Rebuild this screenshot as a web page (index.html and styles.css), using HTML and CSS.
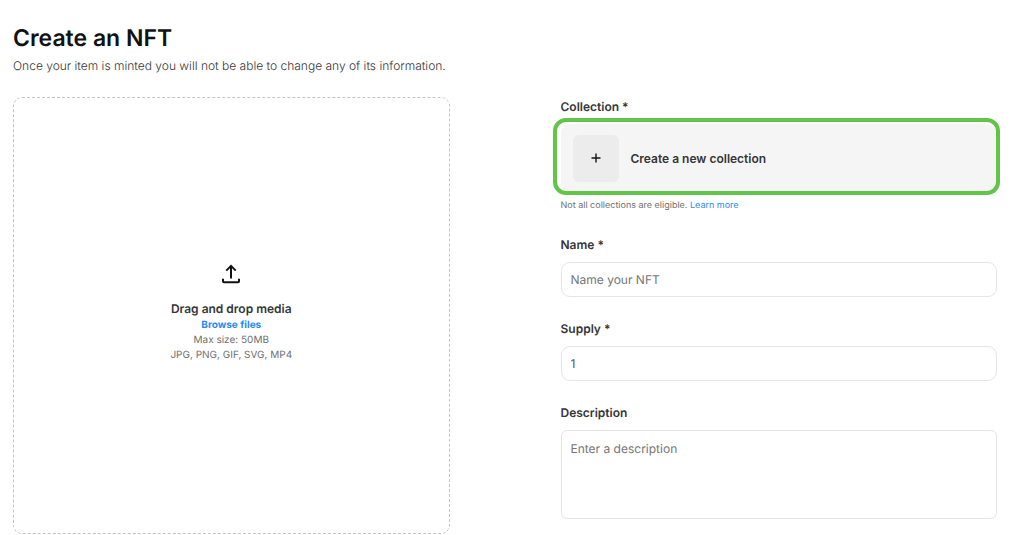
FILE: index.html
```html
<!DOCTYPE html>
<html lang="en">
<head>
<meta charset="utf-8">
<meta name="viewport" content="width=device-width, initial-scale=1">
<title>Create an NFT</title>
<link rel="stylesheet" href="styles.css">
</head>
<body>
<main class="page">
  <header class="intro">
    <h1 class="title">Create an NFT</h1>
    <p class="subtitle">Once your item is minted you will not be able to change any of its information.</p>
  </header>
  <form class="form">
    <section class="dropzone">
      <svg class="upload-icon" viewBox="0 0 20 20" aria-hidden="true">
        <path d="M10 14.5V2M5.3 6.6 10 1.9l4.7 4.7M2 14.7v2.6q0 1 1 1h14q1 0 1-1v-2.6"/>
      </svg>
      <p class="drop-title">Drag and drop media</p>
      <a class="browse" href="#">Browse files</a>
      <p class="drop-hint">Max size: 50MB</p>
      <p class="drop-hint">JPG, PNG, GIF, SVG, MP4</p>
    </section>
    <div class="fields">
      <div class="field">
        <label class="label" for="collection">Collection *</label>
        <button class="collection" id="collection" type="button">
          <span class="plus"><svg class="plus-icon" viewBox="0 0 10 10" aria-hidden="true"><path d="M5 .5v9M.5 5h9"/></svg></span>
          <span>Create a new collection</span>
        </button>
        <p class="note">Not all collections are eligible. <a class="link" href="#">Learn more</a></p>
      </div>
      <div class="field">
        <label class="label" for="name">Name *</label>
        <input class="control" id="name" type="text" placeholder="Name your NFT">
      </div>
      <div class="field">
        <label class="label" for="supply">Supply *</label>
        <input class="control" id="supply" type="text" inputmode="numeric" value="1">
      </div>
      <div class="field">
        <label class="label" for="description">Description</label>
        <textarea class="control area" id="description" placeholder="Enter a description"></textarea>
      </div>
    </div>
  </form>
</main>
</body>
</html>
```
FILE: styles.css
```css
* { box-sizing: border-box; }
body {
  margin: 0;
  background: #fff;
  color: #353637;
  font-family: Inter, "Liberation Sans", sans-serif;
  font-size: 12px;
  text-rendering: geometricPrecision;
}
h1, p { margin: 0; }
a { color: #2a8af5; text-decoration: none; }
.page { padding: 22px 27px 0 13px; }
.intro { margin-bottom: 21px; }
.title {
  color: #121212;
  font-size: 23px;
  font-weight: 600;
  line-height: 32px;
  margin-bottom: 2px;
}
.subtitle { font-weight: 300; line-height: 20px; }
.form {
  display: grid;
  grid-template-columns: 1fr 1fr;
  gap: 111px;
  align-items: start;
}
.dropzone {
  display: flex;
  flex-direction: column;
  align-items: center;
  justify-content: center;
  aspect-ratio: 1;
  padding-bottom: 3px;
  border: 1px dashed #c4c4c4;
  border-radius: 9px;
}
.upload-icon {
  width: 20px;
  height: 20px;
  margin-bottom: 16px;
  fill: none;
  stroke: #121212;
  stroke-width: 2;
}
.drop-title { font-weight: 600; line-height: 18px; }
.browse { font-size: 10px; font-weight: 700; line-height: 15px; }
.drop-hint { color: #707070; font-size: 10px; line-height: 15px; }
.fields { display: grid; gap: 22px; }
.field { display: flex; flex-direction: column; }
.label { font-weight: 600; line-height: 20px; margin-bottom: 7px; }
.collection {
  position: relative;
  display: flex;
  align-items: center;
  gap: 12px;
  height: 68px;
  padding: 0 12px;
  border: 0;
  border-radius: 9px;
  background: #f5f5f5;
  color: inherit;
  font: inherit;
  font-weight: 600;
}
.collection::after {
  content: "";
  position: absolute;
  inset: -6px -3px -3px -8px;
  border: 4px solid #61c54a;
  border-radius: 13px;
}
.plus {
  display: grid;
  place-items: center;
  width: 46px;
  height: 47px;
  border-radius: 6px;
  background: #ececec;
}
.plus-icon { width: 10px; height: 10px; stroke: #121212; stroke-width: 1.4; }
.note { margin-top: 6px; color: #707070; font-size: 9px; line-height: 15px; }
.control {
  width: 100%;
  height: 35px;
  padding: 0 9px;
  border: 1px solid #e5e5e5;
  border-radius: 9px;
  background: #fff;
  color: #555;
  font: inherit;
  text-rendering: inherit;
  outline: 0;
}
.control::placeholder { color: #757575; opacity: 1; }
.area { height: 89px; padding: 10px 9px; border-radius: 6px; line-height: 16px; resize: none; }
```
